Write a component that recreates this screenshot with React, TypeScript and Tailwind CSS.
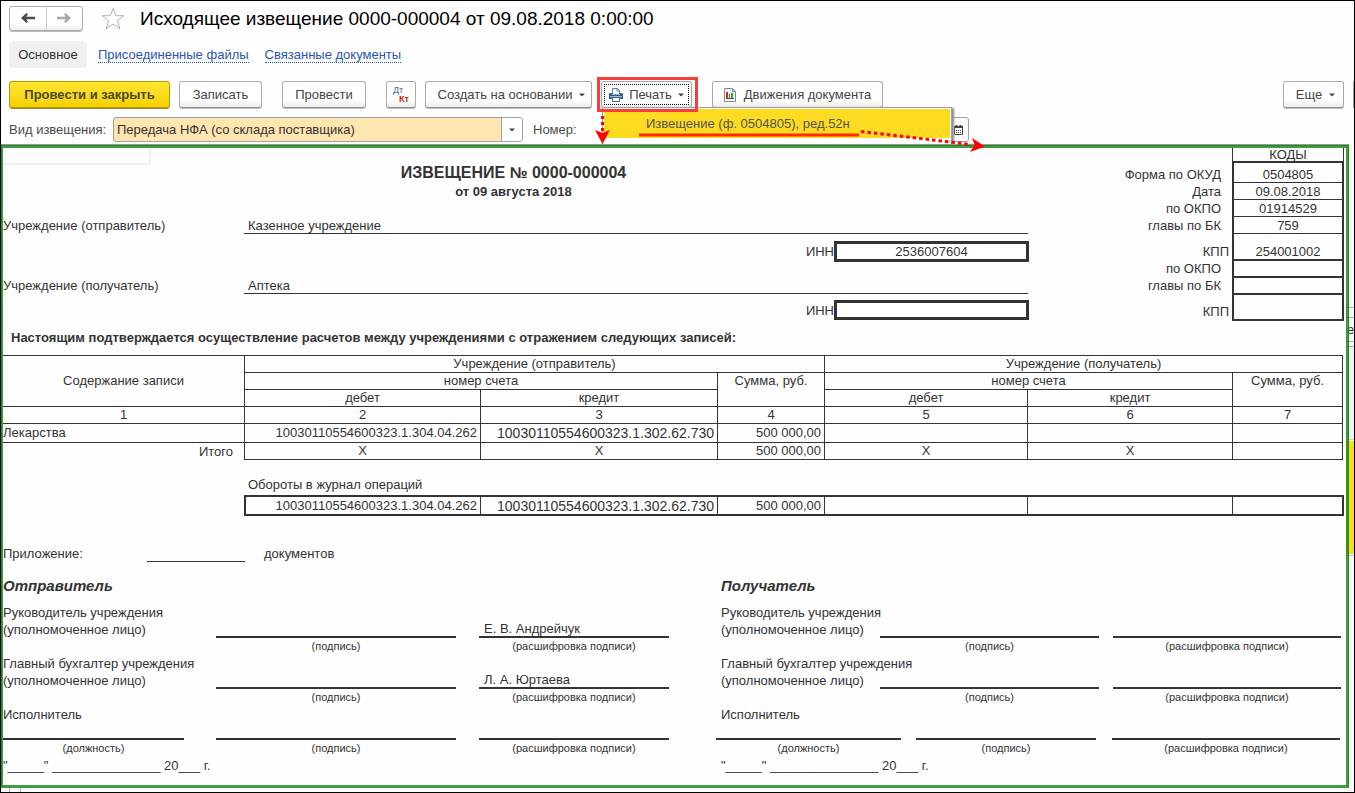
import type { ReactNode } from 'react';

const CODES = [
    { label: 'Форма по ОКУД', value: '0504805', row: 'h-[22px]', cell: 'border-t-2 border-b', pad: 'pr-[11px]' },
    { label: 'Дата', value: '09.08.2018', row: 'h-[17px]', cell: 'border-b', pad: 'pr-[11px]' },
    { label: 'по ОКПО', value: '01914529', row: 'h-[17px]', cell: 'border-b', pad: 'pr-[11px]' },
    { label: 'главы по БК', value: '759', row: 'h-[17px]', cell: 'border-b', pad: 'pr-[11px]' },
    { label: 'КПП', value: '254001002', row: 'h-[27px]', cell: 'border-b-2', pad: 'pr-[3px]' },
    { label: 'по ОКПО', value: '', row: 'h-[17px]', cell: 'border-b-2', pad: 'pr-[11px]' },
    { label: 'главы по БК', value: '', row: 'h-[17px]', cell: 'border-b-2', pad: 'pr-[11px]' },
    { label: 'КПП', value: '', row: 'h-[26px]', cell: 'border-b-2', pad: 'pr-[3px]' }
];

const SIDES = [
    {
        id: 'sender',
        title: 'Отправитель',
        pad: 'pl-0',
        cols: 'grid-cols-[213fr_240fr_23fr_190fr_47fr]',
        lastCols: 'grid-cols-[181fr_32fr_240fr_23fr_190fr_47fr]',
        head: 'Е. В. Андрейчук',
        accountant: 'Л. А. Юртаева'
    },
    {
        id: 'receiver',
        title: 'Получатель',
        pad: 'pl-[5px]',
        cols: 'grid-cols-[164fr_219fr_14fr_228fr_5fr]',
        lastCols: 'grid-cols-[185fr_15fr_180fr_16fr_228fr_6fr]',
        head: '',
        accountant: ''
    }
];

const BTN = 'flex h-[27px] items-center justify-center rounded-[3px] border border-[#ababab] border-b-[#909090] bg-linear-to-b from-white from-70% to-[#ececec] text-[#444] shadow-[0_1px_0_#bbb]';

function Caret() {
    return (
        <svg viewBox="0 0 6 4" className="h-[4px] w-[6px] shrink-0" aria-hidden="true">
            <path d="M0 0.5h6L3 3.5z" fill="#444" />
        </svg>
    );
}

function SignCell({ caption, children }: { caption: string; children?: ReactNode }) {
    return (
        <div>
            <div className="flex h-[34px] items-end border-b-2 border-[#333] pl-[5px] leading-[14px]">{children}</div>
            <div className="text-center text-[11px] leading-[17px]">{caption}</div>
        </div>
    );
}

function SignBlock({ side }: { side: (typeof SIDES)[number] }) {
    return (
        <section className="whitespace-nowrap">
            <h3 className={`text-[15px] leading-[20px] font-bold italic ${side.pad}`}>{side.title}</h3>
            <div className={`mt-[8px] grid h-[51px] ${side.cols}`}>
                <p className={`w-0 ${side.pad}`}>Руководитель учреждения<br />(уполномоченное лицо)</p>
                <SignCell caption="(подпись)" />
                <span />
                <SignCell caption="(расшифровка подписи)">{side.head}</SignCell>
            </div>
            <div className={`grid h-[51px] ${side.cols}`}>
                <p className={`w-0 ${side.pad}`}>Главный бухгалтер учреждения<br />(уполномоченное лицо)</p>
                <SignCell caption="(подпись)" />
                <span />
                <SignCell caption="(расшифровка подписи)">{side.accountant}</SignCell>
            </div>
            <p className={side.pad}>Исполнитель</p>
            <div className={`-mt-[17px] grid h-[51px] ${side.lastCols}`}>
                <SignCell caption="(должность)" />
                <span />
                <SignCell caption="(подпись)" />
                <span />
                <SignCell caption="(расшифровка подписи)" />
            </div>
            <p className={`whitespace-pre ${side.pad}`}>{'"_____" _______________ 20___ г.'}</p>
        </section>
    );
}

function TitleBar() {
    return (
        <header className="flex h-[34px] items-center pl-[8px]">
            <div className="flex h-[25px] w-[74px] rounded-[3px] border border-[#ababab] bg-linear-to-b from-white from-70% to-[#ececec] shadow-[0_1px_0_#bbb]">
                <button type="button" aria-label="Назад" className="flex flex-1 items-center justify-center border-r border-[#d0d0d0]">
                    <svg viewBox="0 0 14 10" className="h-[10px] w-[14px]" fill="#4a4a4a">
                        <path d="M0 5L5.500 0 7 1.200 5.200 3.800H14v2.400H5.200L7 8.800 5.500 10z" />
                    </svg>
                </button>
                <button type="button" aria-label="Вперед" className="flex flex-1 items-center justify-center">
                    <svg viewBox="0 0 14 10" className="h-[10px] w-[14px]" fill="#a8a8a8">
                        <path d="M14 5L8.500 0 7 1.200l1.800 2.600H0v2.400h8.800L7 8.800 8.500 10z" />
                    </svg>
                </button>
            </div>
            <button type="button" aria-label="Избранное" className="ml-[18px]">
                <svg viewBox="0 0 24 23" className="h-[23px] w-[24px]" fill="#fff" stroke="#b0b0b0">
                    <path d="M12 1.500l2.800 7.200h8l-6.400 5 2.400 8L12 17l-6.800 4.700 2.400-8-6.400-5h8z" />
                </svg>
            </button>
            <h1 className="ml-[15px] text-[19px] text-black">Исходящее извещение 0000-000004 от 09.08.2018 0:00:00</h1>
        </header>
    );
}

function PrintMenu() {
    return (
        <div className="relative z-20 ml-[9px]">
            <button type="button" className={`${BTN} w-[91px] from-[#dedede] to-[#f4f4f4]`}>
                <span className="flex h-[21px] w-[85px] items-center justify-between border border-dotted border-black px-[4px]">
                    <svg viewBox="0 0 14 14" className="h-[14px] w-[14px]">
                        <path d="M3.500 6V.5h5l2 2V6" fill="#fff" stroke="#5d7fa3" />
                        <path d="M8 .5V3h2.500" fill="none" stroke="#5d7fa3" />
                        <path d="M1 5h2v1.500h8V5h2l1 1v5H0V6z" fill="#2f5f8c" />
                        <path d="M1 8.500h12" stroke="#9fb9d1" />
                        <path d="M3.500 9.500h7v4h-7z" fill="#fff" stroke="#4b6f93" />
                    </svg>
                    Печать
                    <Caret />
                </span>
            </button>
            <div className="absolute top-[26px] left-[1px] h-[37px] w-[350px] border border-b-0 border-[#a0a0a0] bg-white p-px shadow-[3px_0_2px_-1px_#888]">
                <button type="button" className="flex h-[29px] w-full justify-start bg-[#fcdb20] pt-[6px] pl-[42px] leading-[17px] text-[#555]">
                    Извещение (ф. 0504805), ред.52н
                </button>
            </div>
            <div className="pointer-events-none absolute -top-[4px] -left-[4px] h-[35px] w-[101px] border-3 border-[#fa3c3c]" />
            <svg viewBox="0 0 400 46" className="pointer-events-none absolute top-[26px] -left-[10px] h-[46px] w-[400px]">
                <path d="M11.500 9v16" stroke="#f00" strokeWidth="3" strokeDasharray="3 3" />
                <path d="M11.500 37L4 23l7.500 3 7.500-3z" fill="#f00" />
                <path d="M48 28h220" stroke="#ff2a00" strokeWidth="3" />
                <path d="M270 24.500L380 37.500" stroke="#f00" strokeWidth="3" strokeDasharray="3.500 3" />
                <path d="M394 39.500L381 31l2.500 7-4.500 7z" fill="#f00" />
            </svg>
        </div>
    );
}

function Toolbar() {
    return (
        <div className="mt-[13px] flex h-[27px] pl-[8px]">
            <button type="button" className="h-[27px] w-[161px] rounded-[3px] border border-[#b59a00] bg-linear-to-b from-[#ffe62e] to-[#f5d000] font-bold text-[#4a4a2a] shadow-[0_1px_0_#998a30]">
                Провести и закрыть
            </button>
            <button type="button" className={`${BTN} ml-[9px] w-[83px]`}>Записать</button>
            <button type="button" className={`${BTN} ml-[20px] w-[84px]`}>Провести</button>
            <button type="button" className={`${BTN} ml-[20px] w-[30px] flex-col text-[9px] leading-[9px]`}>
                <span className="mr-[6px] text-[#2f6ea5]">Дт</span>
                <span className="ml-[6px] font-bold text-[#cc2211]">Кт</span>
            </button>
            <button type="button" className={`${BTN} ml-[9px] w-[167px] gap-[7px] pl-[6px]`}>
                Создать на основании
                <Caret />
            </button>
            <PrintMenu />
            <button type="button" className={`${BTN} ml-[20px] w-[171px] gap-[8px]`}>
                <svg viewBox="0 0 12 14" className="h-[14px] w-[12px]">
                    <path d="M.5.5h8l3 3v10H.5z" fill="#fff" stroke="#7c8a9a" />
                    <path d="M8.500.5v3h3" fill="none" stroke="#7c8a9a" />
                    <path d="M3 4v6" stroke="#d22" strokeWidth="2" />
                    <path d="M5.500 6v4" stroke="#d22" />
                    <path d="M8 5v5" stroke="#2a2" strokeWidth="2" />
                    <path d="M2 10.500h8" stroke="#555" />
                </svg>
                Движения документа
            </button>
            <button type="button" className={`${BTN} ml-auto w-[61px] gap-[7px] pl-[4px]`}>
                Еще
                <Caret />
            </button>
            <span className="ml-[9px] w-px bg-[#a0a0a0]" />
        </div>
    );
}

function FilterRow() {
    return (
        <div className="mt-[9px] flex h-[25px] items-center pl-[8px] text-[#4a4a4a]">
            <label htmlFor="kind" className="w-[104px]">Вид извещения:</label>
            <div className="relative w-[410px]">
                <select id="kind" className="h-[25px] w-full appearance-none rounded-[3px] border border-[#a0a0a0] bg-[#ffe5b0] pl-[3px] text-[#333]">
                    <option>Передача НФА (со склада поставщика)</option>
                </select>
                <span className="pointer-events-none absolute top-px right-px flex h-[23px] w-[21px] items-center justify-center rounded-r-[2px] border-l border-[#a0a0a0] bg-white">
                    <Caret />
                </span>
            </div>
            <label htmlFor="number" className="ml-[10px]">Номер:</label>
            <input id="number" type="text" className="ml-[26px] h-[25px] w-[120px] rounded-[3px] border border-[#a0a0a0] bg-white" />
            <div className="ml-auto mr-[385px] flex h-[25px] w-[130px] rounded-[3px] border border-[#a0a0a0] bg-white">
                <input type="text" aria-label="Дата" className="w-[108px]" />
                <button type="button" aria-label="Календарь" className="flex flex-1 items-center justify-center">
                    <svg viewBox="0 0 9 10" className="h-[10px] w-[9px]">
                        <path d="M.5 1.500h8v8h-8z" fill="#fff" stroke="#444" />
                        <path d="M0 2h9M2.500 0v2M6.500 0v2" stroke="#444" strokeWidth="2" />
                        <path d="M2 5.500h5M2 7.500h5" stroke="#444" strokeDasharray="1 1" />
                    </svg>
                </button>
            </div>
        </div>
    );
}

function Inn({ id, value, box }: { id: string; value: string; box: string }) {
    return (
        <div className={`flex items-center justify-end ${box}`}>
            <label htmlFor={id}>ИНН</label>
            <input id={id} type="text" defaultValue={value} className="-mr-px h-full w-[195px] border-3 border-[#333] bg-white text-center" />
        </div>
    );
}

function NoticeHead() {
    return (
        <div className="grid grid-cols-[1fr_316px] pr-[2px]">
            <div>
                <div className="-mb-[17px] h-[17px] w-[148px] border-r-2 border-b-2 border-[#f0f0f0]" />
                <div className="pt-[15px] pr-[4px] text-center font-bold">
                    <h2 className="text-[16px] leading-[20px]">ИЗВЕЩЕНИЕ № 0000-000004</h2>
                    <p>от 09 августа 2018</p>
                </div>
                <div className="mt-[17px] flex">
                    <span className="w-[241px]">Учреждение (отправитель)</span>
                    <span className="h-[17px] flex-1 border-b border-[#333] pl-[4px]">Казенное учреждение</span>
                </div>
                <Inn id="inn-sender" value="2536007604" box="mt-[7px] h-[21px]" />
                <div className="mt-[15px] flex">
                    <span className="w-[241px]">Учреждение (получатель)</span>
                    <span className="h-[17px] flex-1 border-b border-[#333] pl-[4px]">Аптека</span>
                </div>
                <Inn id="inn-receiver" value="" box="mt-[6px] h-[20px]" />
            </div>
            <table className="w-full table-fixed border-separate border-spacing-0 leading-[15px]">
                <colgroup>
                    <col className="w-[204px]" />
                    <col className="w-[112px]" />
                </colgroup>
                <thead>
                    <tr className="h-[13px]">
                        <td />
                        <th scope="col" className="h-[13px] border-x border-[#333] p-0 leading-[11px] font-normal">КОДЫ</th>
                    </tr>
                </thead>
                <tbody>
                    {CODES.map((code, i) => (
                        <tr key={i} className={code.row}>
                            <th scope="row" className={`border-transparent p-0 text-right align-bottom font-normal ${code.cell} ${code.pad}`}>{code.label}</th>
                            <td className={`border-x-2 border-[#333] p-0 text-center align-bottom ${code.cell}`}>{code.value}</td>
                        </tr>
                    ))}
                </tbody>
            </table>
        </div>
    );
}

function EntriesTable() {
    const cell = 'border-r border-b border-[#333] p-0 font-normal';
    return (
        <table className="mt-[9px] w-[calc(100%-3px)] table-fixed border-separate border-spacing-0 border-t border-[#333] text-center leading-[16px]">
            <colgroup>
                <col className="w-[242px]" />
                <col className="w-[236px]" />
                <col className="w-[237px]" />
                <col className="w-[107px]" />
                <col className="w-[203px]" />
                <col className="w-[205px]" />
                <col className="w-[110px]" />
            </colgroup>
            <thead>
                <tr className="h-[17px]">
                    <th rowSpan={3} className={cell}>Содержание записи</th>
                    <th colSpan={3} className={cell}>Учреждение (отправитель)</th>
                    <th colSpan={3} className={cell}>Учреждение (получатель)</th>
                </tr>
                <tr className="h-[17px]">
                    <th colSpan={2} className={cell}>номер счета</th>
                    <th rowSpan={2} className={`${cell} align-top`}>Сумма, руб.</th>
                    <th colSpan={2} className={cell}>номер счета</th>
                    <th rowSpan={2} className={`${cell} align-top`}>Сумма, руб.</th>
                </tr>
                <tr className="h-[17px]">
                    <th className={cell}>дебет</th>
                    <th className={cell}>кредит</th>
                    <th className={cell}>дебет</th>
                    <th className={cell}>кредит</th>
                </tr>
                <tr className="h-[17px]">
                    {[1, 2, 3, 4, 5, 6, 7].map((n) => (
                        <th key={n} className={cell}>{n}</th>
                    ))}
                </tr>
            </thead>
            <tbody>
                <tr className="h-[19px]">
                    <td className={`${cell} text-left`}>Лекарства</td>
                    <td className={`${cell} pr-[3px] text-right`}>10030110554600323.1.304.04.262</td>
                    <td className={`${cell} pr-[3px] text-right text-[14px]`}>10030110554600323.1.302.62.730</td>
                    <td className={`${cell} pr-[3px] text-right`}>500 000,00</td>
                    <td className={cell} />
                    <td className={cell} />
                    <td className={cell} />
                </tr>
                <tr className="h-[17px]">
                    <td className="border-r border-[#333] p-0 pr-[11px] text-right">Итого</td>
                    <td className={cell}>Х</td>
                    <td className={cell}>Х</td>
                    <td className={`${cell} pr-[3px] text-right`}>500 000,00</td>
                    <td className={cell}>Х</td>
                    <td className={cell}>Х</td>
                    <td className={cell} />
                </tr>
            </tbody>
        </table>
    );
}

function TurnoverTable() {
    const cell = 'border-r border-[#333] p-0 pr-[3px] text-right';
    return (
        <table className="mt-[16px] ml-[241px] w-[calc(100%-243px)] table-fixed border-separate border-spacing-0 border-2 border-[#333] leading-[16px]">
            <caption className="h-[19px] pl-[4px] text-left leading-[17px]">Обороты в журнал операций</caption>
            <colgroup>
                <col className="w-[235px]" />
                <col className="w-[237px]" />
                <col className="w-[107px]" />
                <col className="w-[203px]" />
                <col className="w-[205px]" />
                <col className="w-[109px]" />
            </colgroup>
            <tbody>
                <tr className="h-[17px]">
                    <td className={cell}>10030110554600323.1.304.04.262</td>
                    <td className={`${cell} text-[14px]`}>10030110554600323.1.302.62.730</td>
                    <td className={cell}>500 000,00</td>
                    <td className={cell} />
                    <td className={cell} />
                    <td className="p-0" />
                </tr>
            </tbody>
        </table>
    );
}

export default function App() {
    return (
        <div className="flex min-h-screen flex-col border border-black bg-[#fefefe] font-['Liberation_Sans',Arial,sans-serif] text-[13px] leading-[17px] text-[#333]">
            <TitleBar />
            <nav className="mt-[6px] flex h-[27px] items-center pl-[8px]">
                <a href="#main" className="flex h-[27px] w-[78px] items-center justify-center rounded-[4px] bg-[#f0f0f0]">Основное</a>
                <a href="#files" className="ml-[11px] border-b border-dotted border-[#2a55b5] leading-[15px] text-[#2a55b5]">Присоединенные файлы</a>
                <a href="#links" className="ml-[16px] border-b border-dotted border-[#2a55b5] leading-[15px] text-[#2a55b5]">Связанные документы</a>
            </nav>
            <Toolbar />
            <FilterRow />

            <div className="mt-[3px] flex">
                <main className="relative z-10 flex-1 border-3 border-l-2 border-[#008000c2] bg-[#fefefe] bg-clip-padding pb-[11px] shadow-[0_-1px_0_#999]">
                    <NoticeHead />
                    <p className="mt-[8px] pl-[8px] font-bold">
                        Настоящим подтверждается осуществление расчетов между учреждениями с отражением следующих записей:
                    </p>
                    <EntriesTable />
                    <TurnoverTable />
                    <div className="mt-[29px] flex">
                        <label htmlFor="attached" className="w-[144px]">Приложение:</label>
                        <input id="attached" type="text" className="mr-[19px] h-[17px] w-[98px] border-b border-[#333]" />
                        документов
                    </div>
                    <div className="mt-[14px] grid grid-cols-[713fr_630fr]">
                        {SIDES.map((side) => (
                            <SignBlock key={side.id} side={side} />
                        ))}
                    </div>
                </main>
                <aside className="-ml-[3px] w-[8px] overflow-hidden pt-[162px]">
                    <div className="h-[11px] border-y border-[#b0b0b0]" />
                    <div className="h-[23px] pl-px leading-[24px]">е</div>
                    <div className="h-[6px] border-y border-[#b0b0b0]" />
                    <div className="h-[93px] border-b border-[#ccc] bg-[#f3f3f3]" />
                    <div className="mt-px h-[113px] bg-[#fcdb20]" />
                    <div className="mt-px h-px bg-[#ccc]" />
                </aside>
            </div>
            <div className="ml-[8px] h-[4px] w-[12px] border-x border-[#b0b0b0]" />
        </div>
    );
}
